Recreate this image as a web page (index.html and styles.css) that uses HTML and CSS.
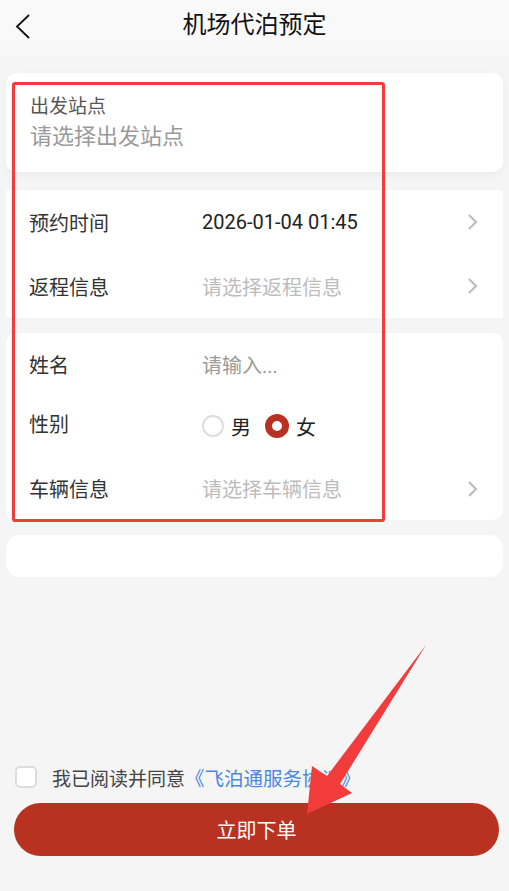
FILE: index.html
```html
<!DOCTYPE html>
<html lang="zh">
<head>
<meta charset="utf-8">
<title>机场代泊预定</title>
<link rel="stylesheet" href="styles.css">
</head>
<body>
<div class="page">
  <header class="nav">
    <svg class="back" width="20" height="30" viewBox="0 0 20 30"><polyline points="14,3 2,14.5 14,26" fill="none" stroke="#111" stroke-width="1.8"/></svg>
    <h1 class="title">机场代泊预定</h1>
  </header>

  <main class="content">
    <section class="card card-station">
      <div class="station-label">出发站点</div>
      <div class="station-ph">请选择出发站点</div>
    </section>

    <section class="card card-square">
      <div class="row">
        <span class="label">预约时间</span>
        <span class="value">2026-01-04 01:45</span>
        <svg class="chev" width="12" height="18" viewBox="0 0 12 18"><polyline points="2,2 9,9 2,16" fill="none" stroke="#bdbdbd" stroke-width="2.2"/></svg>
      </div>
      <div class="row">
        <span class="label">返程信息</span>
        <span class="value ph">请选择返程信息</span>
        <svg class="chev" width="12" height="18" viewBox="0 0 12 18"><polyline points="2,2 9,9 2,16" fill="none" stroke="#bdbdbd" stroke-width="2.2"/></svg>
      </div>
    </section>

    <section class="card card-form">
      <div class="row row-62">
        <span class="label">姓名</span>
        <span class="value ph2">请输入...</span>
      </div>
      <div class="row row-62">
        <span class="label label-up">性别</span>
        <span class="value radios">
          <span class="radio"></span><span class="radio-text">男</span>
          <span class="radio radio-on"></span><span class="radio-text">女</span>
        </span>
      </div>
      <div class="row row-62">
        <span class="label">车辆信息</span>
        <span class="value ph">请选择车辆信息</span>
        <svg class="chev" width="12" height="18" viewBox="0 0 12 18"><polyline points="2,2 9,9 2,16" fill="none" stroke="#bdbdbd" stroke-width="2.2"/></svg>
      </div>
    </section>

    <section class="card card-empty"></section>
  </main>

  <footer class="footer">
    <div class="agree">
      <span class="checkbox"></span>
      <span class="agree-text">我已阅读并同意</span><span class="agree-link">《飞泊通服务协议》</span>
    </div>
    <button class="submit">立即下单</button>
  </footer>

  <div class="mark-rect"></div>
  <svg class="mark-arrow" width="509" height="891" viewBox="0 0 509 891">
    <polygon points="426,645 340,784 352,793 307,814 312,766 327,776" fill="#f23b3b"/>
  </svg>
</div>
</body>
</html>
```

FILE: styles.css
```css
* { box-sizing: border-box; }
html, body { margin: 0; padding: 0; }
body {
  background: #f5f5f5;
  font-family: Roboto, "Noto Sans CJK SC", sans-serif;
  color: #333;
}
.page {
  position: relative;
  width: 509px;
  height: 891px;
  display: flex;
  flex-direction: column;
  overflow: hidden;
}
.nav {
  position: relative;
  height: 60px;
  display: flex;
  align-items: flex-start;
  justify-content: center;
  background: linear-gradient(#f9f9f9 0, #f9f9f9 45px, #f5f5f5 60px);
  flex: none;
}
.back {
  position: absolute;
  left: 15px;
  top: 12px;
}
.title {
  margin: 9px 0 0;
  font-size: 24px;
  font-weight: 400;
  color: #111;
  line-height: 32px;
}
.content {
  padding: 13px 6px 0;
  display: flex;
  flex-direction: column;
  gap: 15px;
  flex: none;
}
.card {
  background: #fff;
  border-radius: 10px;
}
.card-station {
  height: 99px;
  padding: 22px 24px 0;
  box-shadow: 0 3px 8px rgba(0,0,0,0.04);
  margin-bottom: 3px;
}
.station-label {
  font-size: 19px;
  line-height: 24px;
  color: #555;
}
.station-ph {
  margin-top: 4px;
  font-size: 22px;
  line-height: 28px;
  color: #9a9a9a;
}
.card-square {
  border-radius: 2px;
}
.row {
  height: 64px;
  display: flex;
  align-items: center;
  padding: 0 24px 0 23px;
}
.row-62 { height: 62.3px; }
.card-form { padding: 0; }
.label {
  width: 173px;
  font-size: 20px;
  color: #333;
  flex: none;
}
.label-up { position: relative; top: -3px; }
.value {
  flex: 1;
  font-size: 20px;
  color: #222;
}
.ph { color: #bcbcbc; }
.ph2 { color: #9a9a9a; }
.chev { flex: none; }
.radios {
  display: flex;
  align-items: center;
}
.radio {
  width: 22px;
  height: 22px;
  border-radius: 50%;
  border: 2px solid #dedede;
  flex: none;
}
.radio-on {
  width: 24px;
  height: 24px;
  border: 7px solid #b93221;
  margin-left: 14px;
}
.radio-text {
  margin-left: 7px;
  font-size: 20px;
  color: #222;
}
.card-empty {
  height: 42px;
  border-radius: 14px;
}
.footer {
  margin-top: auto;
  padding: 0 10px 35px 14px;
  display: flex;
  flex-direction: column;
}
.agree {
  display: flex;
  align-items: center;
  height: 22px;
  padding-left: 1px;
}
.checkbox {
  width: 22px;
  height: 22px;
  border: 2px solid #dcdcdc;
  border-radius: 5px;
  background: #fff;
  flex: none;
}
.agree-text {
  margin-left: 15px;
  font-size: 19px;
  color: #444;
}
.agree-link {
  font-size: 19.5px;
  color: #4c87e3;
}
.submit {
  margin-top: 15px;
  width: 485px;
  height: 53px;
  border: none;
  border-radius: 27px;
  background: #b93221;
  color: #fff;
  font-family: "Noto Sans CJK SC", sans-serif;
  font-size: 20px;
}
.mark-rect {
  position: absolute;
  left: 12px;
  top: 82px;
  width: 373px;
  height: 440px;
  border: 3px solid #f23b3b;
  border-radius: 3px;
  pointer-events: none;
}
.mark-arrow {
  position: absolute;
  left: 0;
  top: 0;
  pointer-events: none;
}
```
